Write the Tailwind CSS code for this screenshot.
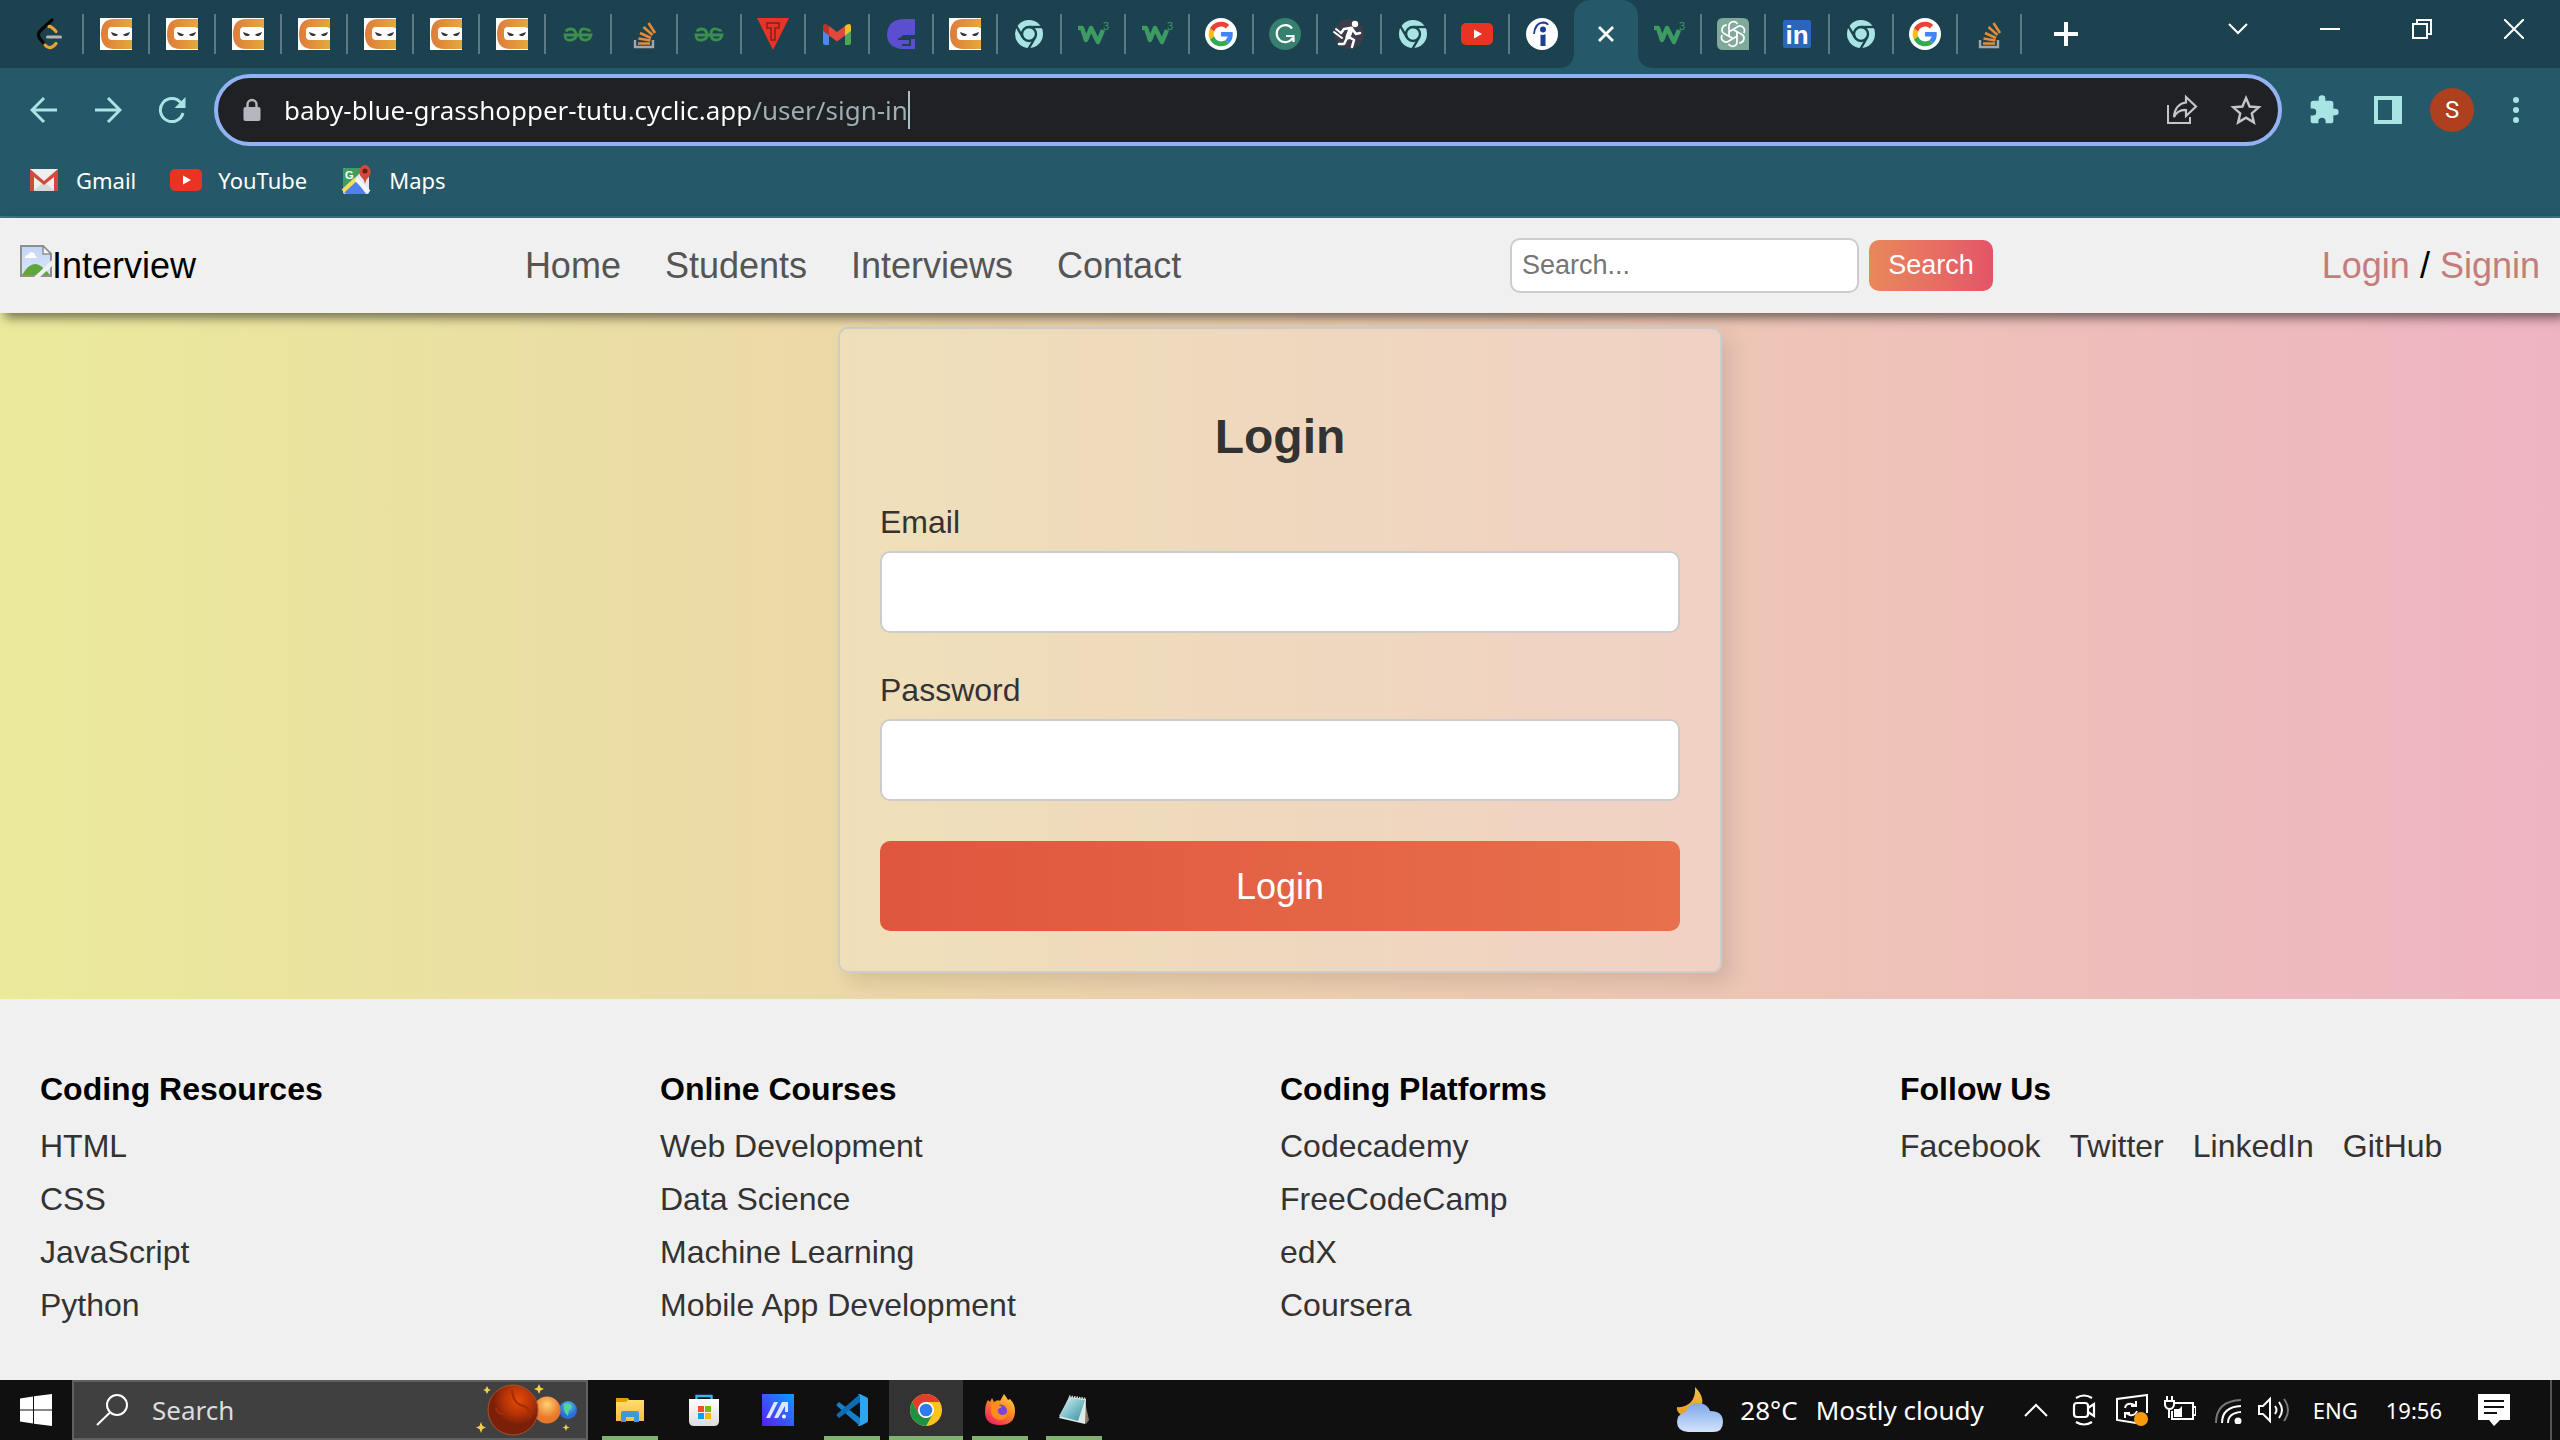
<!DOCTYPE html>
<html lang="en">
<head>
<meta charset="utf-8">
<meta name="viewport" content="width=device-width, initial-scale=1">
<title>Sign in</title>
<script src="https://cdn.jsdelivr.net/npm/@tailwindcss/browser@4"></script>
</head>
<body class="flex min-h-screen flex-col bg-[#f0f0f0] font-['Liberation_Sans',Arial,sans-serif] text-[32px] leading-[37px] text-[#333]">

<!-- Shared icon symbols -->
<svg class="absolute size-0" aria-hidden="true">
  <defs>
    <linearGradient id="cnGrad"><stop offset="0" stop-color="#de7c3c"/><stop offset="1" stop-color="#e5a83a"/></linearGradient>
    <linearGradient id="sky" x2="0" y2="1"><stop offset="0" stop-color="#c3d5f6"/><stop offset="1" stop-color="#dbe6fb"/></linearGradient>
    <linearGradient id="folder" x2="0" y2="1"><stop offset="0" stop-color="#ffdc6e"/><stop offset="1" stop-color="#f8bd40"/></linearGradient>
    <linearGradient id="bag" x2="0" y2="1"><stop offset="0" stop-color="#fff"/><stop offset="1" stop-color="#dcdcdc"/></linearGradient>
    <linearGradient id="myasus" x1="0" y1="1" x2="1" y2="0"><stop offset="0" stop-color="#5a1cf5"/><stop offset="1" stop-color="#0f9bff"/></linearGradient>
    <radialGradient id="mars" cx=".6" cy=".3"><stop offset="0" stop-color="#e84a06"/><stop offset=".6" stop-color="#b23206"/><stop offset="1" stop-color="#7a1f08"/></radialGradient>
    <radialGradient id="venus" cx=".5" cy=".3"><stop offset="0" stop-color="#ffd070"/><stop offset="1" stop-color="#e8782c"/></radialGradient>
    <radialGradient id="earth" cx=".5" cy=".3"><stop offset="0" stop-color="#5fc4ee"/><stop offset="1" stop-color="#2a6fd6"/></radialGradient>
    <linearGradient id="cloud" x2="0" y2="1"><stop offset="0" stop-color="#7ea6ea"/><stop offset="1" stop-color="#d3e4fb"/></linearGradient>
    <linearGradient id="moon" x2="0" y2="1"><stop offset="0" stop-color="#f2c04a"/><stop offset="1" stop-color="#ea9a1e"/></linearGradient>
    <linearGradient id="fox" x1="1" y1="0" x2=".3" y2="1"><stop offset="0" stop-color="#ffe14a"/><stop offset=".5" stop-color="#ff8a1e"/><stop offset="1" stop-color="#f0265e"/></linearGradient>
    <linearGradient id="pad" x2="1" y2="1"><stop offset="0" stop-color="#dff4f6"/><stop offset=".6" stop-color="#6fb8c4"/><stop offset="1" stop-color="#3d8c9a"/></linearGradient>
  </defs>
  <symbol id="leet" viewBox="0 0 32 32"><path d="M18 2 L6.500 12.500 Q3 16 5.500 20 L11 27" fill="none" stroke="#070707" stroke-width="3.200" stroke-linecap="round"/><path d="M15 8.500 Q17 8 22 13.500 M11 27 Q16 33 22 25.500" fill="none" stroke="#eaa136" stroke-width="3.200" stroke-linecap="round"/><path d="M13.500 19h13" stroke="#b3b3b3" stroke-width="3" stroke-linecap="round"/></symbol>
  <symbol id="cn" viewBox="0 0 32 32"><path d="M0 0h32v32H0z" fill="#fff"/><path d="M32 1H14Q1 1 1 16t13 15h18v-9H13q-4 0-4-6t4-6h19z" fill="url(#cnGrad)"/><rect x="8" y="9" width="24" height="13" rx="4" fill="#fff"/><path d="M11 14l7 2.500q-1 2-3.500 1.500T11 14zM30 14l-7 2.500q1 2 3.500 1.500T30 14z" fill="#333"/></symbol>
  <symbol id="gfg" viewBox="0 0 32 32"><g fill="none" stroke="#3b8f4c" stroke-width="2.800"><path d="M4 13.500Q5 11 9 11t5 5-5 6-6-5h26q-1 5-6 5t-5-6 5-5 5 2.500"/></g></symbol>
  <symbol id="so" viewBox="0 0 32 32"><path d="M7 22v7h18v-7" fill="none" stroke="#a6a6a6" stroke-width="2.400"/><g stroke="#e58a36" stroke-width="2.600"><path d="M10 25.500h12M10.500 20.500l12 2M12 15l11 5M15.500 9l9 8M20.500 5l6.500 10"/></g></symbol>
  <symbol id="chromeMono" viewBox="0 0 32 32"><circle cx="16" cy="16" r="14" fill="#a8e4e4"/><circle cx="16" cy="16" r="7" fill="none" stroke="#1c424f" stroke-width="2.400"/><g stroke="#1c424f" stroke-width="2.400"><path d="M16 9h15"/><path d="M16 9h15" transform="rotate(120 16 16)"/><path d="M16 9h15" transform="rotate(240 16 16)"/></g></symbol>
  <symbol id="w3" viewBox="0 0 32 32"><path d="M1 10h4l4 12 5-12 7 14 5-12" fill="none" stroke="#3c9a62" stroke-width="4.500" stroke-linejoin="round"/><text x="26" y="12" font-size="11" font-family="Liberation Sans" fill="#3c9a62">3</text></symbol>
  <symbol id="google" viewBox="0 0 48 48"><circle cx="24" cy="24" r="24" fill="#fff"/><g transform="translate(5.500 5.500) scale(.77)"><path fill="#EA4335" d="M24 9.500c3.540 0 6.710 1.220 9.210 3.600l6.850-6.850C35.900 2.380 30.470 0 24 0 14.620 0 6.510 5.380 2.560 13.220l7.980 6.190C12.430 13.720 17.740 9.500 24 9.500z"/><path fill="#4285F4" d="M46.980 24.550c0-1.570-.15-3.090-.38-4.550H24v9.020h12.940c-.58 2.960-2.260 5.480-4.780 7.180l7.730 6c4.510-4.180 7.090-10.360 7.090-17.650z"/><path fill="#FBBC05" d="M10.530 28.590c-.48-1.450-.76-2.990-.76-4.590s.27-3.140.76-4.590l-7.980-6.190C.92 16.460 0 20.120 0 24c0 3.880.92 7.540 2.560 10.780l7.970-6.190z"/><path fill="#34A853" d="M24 48c6.480 0 11.930-2.130 15.890-5.810l-7.730-6c-2.150 1.450-4.920 2.300-8.160 2.300-6.260 0-11.570-4.220-13.470-9.910l-7.980 6.190C6.510 42.620 14.620 48 24 48z"/></g></symbol>
  <symbol id="yt" viewBox="0 0 32 32"><rect y="5" width="32" height="22" rx="5" fill="#ea3323"/><path d="M13 11.500v9l8-4.500z" fill="#fff"/></symbol>
</svg>

<!-- Browser window -->
<header class="bg-[#255868] font-['Noto_Sans','Open_Sans',sans-serif] text-white">
  <div class="flex h-[68px] items-stretch justify-between bg-[#1c424f]">
    <div role="tablist" aria-label="Open tabs" class="flex items-center pl-[18px]">
      <button aria-label="LeetCode" class="grid h-10 w-[66px] place-items-center border-r-2 border-[#5c7b85]"><svg class="size-8"><use href="#leet"/></svg></button>
      <button aria-label="Coding Ninjas" class="grid h-10 w-[66px] place-items-center border-r-2 border-[#5c7b85]"><svg class="size-8"><use href="#cn"/></svg></button>
      <button aria-label="Coding Ninjas" class="grid h-10 w-[66px] place-items-center border-r-2 border-[#5c7b85]"><svg class="size-8"><use href="#cn"/></svg></button>
      <button aria-label="Coding Ninjas" class="grid h-10 w-[66px] place-items-center border-r-2 border-[#5c7b85]"><svg class="size-8"><use href="#cn"/></svg></button>
      <button aria-label="Coding Ninjas" class="grid h-10 w-[66px] place-items-center border-r-2 border-[#5c7b85]"><svg class="size-8"><use href="#cn"/></svg></button>
      <button aria-label="Coding Ninjas" class="grid h-10 w-[66px] place-items-center border-r-2 border-[#5c7b85]"><svg class="size-8"><use href="#cn"/></svg></button>
      <button aria-label="Coding Ninjas" class="grid h-10 w-[66px] place-items-center border-r-2 border-[#5c7b85]"><svg class="size-8"><use href="#cn"/></svg></button>
      <button aria-label="Coding Ninjas" class="grid h-10 w-[66px] place-items-center border-r-2 border-[#5c7b85]"><svg class="size-8"><use href="#cn"/></svg></button>
      <button aria-label="GeeksforGeeks" class="grid h-10 w-[66px] place-items-center border-r-2 border-[#5c7b85]"><svg class="size-8"><use href="#gfg"/></svg></button>
      <button aria-label="Stack Overflow" class="grid h-10 w-[66px] place-items-center border-r-2 border-[#5c7b85]"><svg class="size-8"><use href="#so"/></svg></button>
      <button aria-label="GeeksforGeeks" class="grid h-10 w-16 place-items-center border-r-2 border-[#5c7b85]"><svg class="size-8"><use href="#gfg"/></svg></button>
      <button aria-label="Titan" class="grid h-10 w-16 place-items-center border-r-2 border-[#5c7b85]"><svg class="size-8" viewBox="0 0 32 32"><path d="M0 0h32L16 32z" fill="#e93323"/><path d="M10 5h12v5h-4v12h-4V10h-4z" fill="none" stroke="#7d2224" stroke-width="1.500"/></svg></button>
      <button aria-label="Gmail" class="grid h-10 w-16 place-items-center border-r-2 border-[#5c7b85]"><svg class="size-8" viewBox="0 0 32 32"><path d="M2 8v17q0 2 2 2h4V14z" fill="#4f87ee"/><path d="M30 8v17q0 2-2 2h-4V14z" fill="#4ba656"/><path d="M24 8l2-1.500q4-2 4 2.500v4l-6 4.500z" fill="#f4bd2c"/><path d="M8 8L6 6.500Q2 4.500 2 9v4l6 4.500z" fill="#b93427"/><path d="M8 8l8 6 8-6v9.500l-8 6-8-6z" fill="#e04a3c"/></svg></button>
      <button aria-label="Dashboard" class="grid h-10 w-16 place-items-center border-r-2 border-[#5c7b85]"><svg class="size-8" viewBox="0 0 32 32"><path d="M30 1v16H20q-4 0-5 4h15v10H16Q2 29 2 16 3 1 20 1z" fill="#5b4fd0"/><path d="M13 21h12v6h-8" fill="none" stroke="#1c424f" stroke-width="2"/></svg></button>
      <button aria-label="Coding Ninjas" class="grid h-10 w-16 place-items-center border-r-2 border-[#5c7b85]"><svg class="size-8"><use href="#cn"/></svg></button>
      <button aria-label="Chrome" class="grid h-10 w-16 place-items-center border-r-2 border-[#5c7b85]"><svg class="size-8"><use href="#chromeMono"/></svg></button>
      <button aria-label="W3Schools" class="grid h-10 w-16 place-items-center border-r-2 border-[#5c7b85]"><svg class="size-8"><use href="#w3"/></svg></button>
      <button aria-label="W3Schools" class="grid h-10 w-16 place-items-center border-r-2 border-[#5c7b85]"><svg class="size-8"><use href="#w3"/></svg></button>
      <button aria-label="Google" class="grid h-10 w-16 place-items-center border-r-2 border-[#5c7b85]"><svg class="size-8"><use href="#google"/></svg></button>
      <button aria-label="Grammarly" class="grid h-10 w-16 place-items-center border-r-2 border-[#5c7b85]"><svg class="size-8" viewBox="0 0 32 32"><circle cx="16" cy="16" r="16" fill="#36806f"/><path d="M23 10.500A8.500 8.500 0 1 0 23.500 20M17 18h7.500v6" fill="none" stroke="#fff" stroke-width="2.200"/></svg></button>
      <button aria-label="Runner" class="grid h-10 w-16 place-items-center border-r-2 border-[#5c7b85]"><svg class="size-8" viewBox="0 0 32 32"><circle cx="16" cy="16" r="15" fill="#3c3d4b"/><circle cx="22" cy="6" r="3.200" fill="#fff"/><g fill="none" stroke="#fff" stroke-linecap="round" stroke-linejoin="round"><path d="M18 11l-3 8" stroke-width="5"/><path d="M17 10l-6 1-3 4M20 12l3 4 4-1M16 19l5 3-2 7M14 20l-3 6H6" stroke-width="2.600"/><path d="M1 14l8 6M3 11l5 4" stroke-width="2"/></g></svg></button>
      <button aria-label="Chrome" class="grid h-10 w-16 place-items-center border-r-2 border-[#5c7b85]"><svg class="size-8"><use href="#chromeMono"/></svg></button>
      <button aria-label="YouTube" class="grid h-10 w-16 place-items-center border-r-2 border-[#5c7b85]"><svg class="size-8"><use href="#yt"/></svg></button>
      <button aria-label="Indeed" class="grid h-10 w-16 place-items-center"><svg class="size-8" viewBox="0 0 32 32"><circle cx="16" cy="16" r="16" fill="#fff"/><circle cx="17" cy="11.500" r="3" fill="#1c3f94"/><path d="M14.500 16.500q2.500 1 5-.500V28h-5z" fill="#1c3f94"/><path d="M8 16Q9 5 17 4.500q4 0 5 2.500" fill="none" stroke="#1c3f94" stroke-width="1.800"/></svg></button>
      <button aria-label="Close tab" class="relative grid h-[68px] w-16 place-items-center rounded-t-2xl bg-[#255868]">
        <svg class="absolute bottom-0 -left-4 size-4" viewBox="0 0 16 16"><path d="M16 0v16H0Q16 16 16 0z" fill="#255868"/></svg>
        <svg class="absolute -right-4 bottom-0 size-4" viewBox="0 0 16 16"><path d="M0 0v16h16Q0 16 0 0z" fill="#255868"/></svg>
        <svg class="size-4" viewBox="0 0 16 16"><path d="M1 1l14 14M15 1L1 15" stroke="#fff" stroke-width="2.800"/></svg>
      </button>
      <button aria-label="W3Schools" class="grid h-10 w-16 place-items-center border-r-2 border-[#5c7b85]"><svg class="size-8"><use href="#w3"/></svg></button>
      <button aria-label="ChatGPT" class="grid h-10 w-16 place-items-center border-r-2 border-[#5c7b85]"><svg class="size-8" viewBox="0 0 32 32"><path d="M6 0h20q6 0 6 6v26H6q-6 0-6-6V6q0-6 6-6z" fill="#7fa99b"/><g fill="none" stroke="#fff" stroke-width="1.700"><path d="M16 11.500l-4 2.300V8.500a4.500 4.500 0 0 1 8.500-2.300"/><path d="M16 11.500l-4 2.300V8.500a4.500 4.500 0 0 1 8.500-2.300" transform="rotate(60 16 16)"/><path d="M16 11.500l-4 2.300V8.500a4.500 4.500 0 0 1 8.500-2.300" transform="rotate(120 16 16)"/><path d="M16 11.500l-4 2.300V8.500a4.500 4.500 0 0 1 8.500-2.300" transform="rotate(180 16 16)"/><path d="M16 11.500l-4 2.300V8.500a4.500 4.500 0 0 1 8.500-2.300" transform="rotate(240 16 16)"/><path d="M16 11.500l-4 2.300V8.500a4.500 4.500 0 0 1 8.500-2.300" transform="rotate(300 16 16)"/></g></svg></button>
      <button aria-label="LinkedIn" class="grid h-10 w-16 place-items-center border-r-2 border-[#5c7b85]"><svg class="size-8" viewBox="0 0 32 32"><rect x="2" y="2" width="28" height="28" rx="2" fill="#2a66bc"/><text x="16" y="26" text-anchor="middle" font-family="Liberation Sans" font-weight="700" font-size="26" fill="#fff">in</text></svg></button>
      <button aria-label="Chrome" class="grid h-10 w-16 place-items-center border-r-2 border-[#5c7b85]"><svg class="size-8"><use href="#chromeMono"/></svg></button>
      <button aria-label="Google" class="grid h-10 w-16 place-items-center border-r-2 border-[#5c7b85]"><svg class="size-8"><use href="#google"/></svg></button>
      <button aria-label="Stack Overflow" class="grid h-10 w-16 place-items-center border-r-2 border-[#5c7b85]"><svg class="size-8"><use href="#so"/></svg></button>
      <button aria-label="New tab" class="grid h-10 w-[88px] place-items-center"><svg class="size-6" viewBox="0 0 24 24"><path d="M12 1v22M1 12h22" stroke="#fff" stroke-width="4" stroke-linecap="round"/></svg></button>
    </div>
    <div class="flex h-[58px] items-center">
      <button aria-label="Search tabs" class="grid w-[92px] place-items-center"><svg class="size-5" viewBox="0 0 20 20"><path d="M1 5l9 9 9-9" fill="none" stroke="#fff" stroke-width="2"/></svg></button>
      <button aria-label="Minimize" class="grid w-[92px] place-items-center"><svg class="size-5" viewBox="0 0 20 20"><path d="M0 10h20" stroke="#fff" stroke-width="2"/></svg></button>
      <button aria-label="Restore" class="grid w-[92px] place-items-center"><svg class="size-5" viewBox="0 0 20 20"><path d="M1 5h14v14H1zM5 5V1h14v14h-4" fill="none" stroke="#fff" stroke-width="2"/></svg></button>
      <button aria-label="Close" class="grid w-[92px] place-items-center"><svg class="size-5" viewBox="0 0 20 20"><path d="M0 0l20 20M20 0L0 20" stroke="#fff" stroke-width="2"/></svg></button>
    </div>
  </div>

  <div class="flex items-center pt-1.5 text-[#a8e4e4]">
    <div class="flex pl-3">
      <button aria-label="Back" class="grid h-16 w-16 place-items-center"><svg class="size-7" viewBox="0 0 28 28"><path d="M27 14H3M14 2L2 14l12 12" fill="none" stroke="currentColor" stroke-width="3"/></svg></button>
      <button aria-label="Forward" class="grid h-16 w-16 place-items-center"><svg class="size-7" viewBox="0 0 28 28"><path d="M1 14h24M14 2l12 12-12 12" fill="none" stroke="currentColor" stroke-width="3"/></svg></button>
      <button aria-label="Reload" class="grid h-16 w-16 place-items-center"><svg class="size-7" viewBox="0 0 28 28"><path d="M23 7A11.500 11.500 0 1 0 25 17" fill="none" stroke="currentColor" stroke-width="3"/><path d="M27.500 1v11h-11z" fill="currentColor"/></svg></button>
    </div>
    <div class="ml-[10px] flex h-[72px] flex-1 items-center rounded-full border-4 border-[#93b2f2] bg-[#202124] pl-6">
      <svg class="h-6 w-5 shrink-0" viewBox="0 0 20 24"><rect x="1.500" y="9" width="17" height="14" rx="2" fill="#b4b8be"/><path d="M5.500 10V6.500a4.500 4.500 0 0 1 9 0V10" fill="none" stroke="#b4b8be" stroke-width="2.400"/></svg>
      <input type="text" aria-label="Address" value="baby-blue-grasshopper-tutu.cyclic.app/user/sign-in" class="ml-[22px] field-sizing-content bg-[linear-gradient(to_right,#fff_468px,#9fb0b5_468px)] bg-clip-text text-[26px] leading-9 text-transparent outline-none">
      <span class="h-[38px] w-0.5 bg-[#a9bfc3]"></span>
      <button aria-label="Share" class="ml-auto grid w-16 place-items-center text-[#c3c5c8]"><svg class="size-8" viewBox="0 0 32 32"><path d="M2 11v18h22v-6" fill="none" stroke="currentColor" stroke-width="2"/><path d="M20 3l10 9.500L20 22v-6q-8-.500-12 7 1-13 12-14.500z" fill="none" stroke="currentColor" stroke-width="2.200"/></svg></button>
      <button aria-label="Bookmark this tab" class="grid w-16 place-items-center text-[#c3c5c8]"><svg class="size-8" viewBox="0 0 32 32"><path d="M16 4l3.600 8.500 9.200.800-7 6.100 2.100 9L16 23.600l-7.900 4.800 2.100-9-7-6.100 9.200-.800z" fill="none" stroke="currentColor" stroke-width="2.400"/></svg></button>
    </div>
    <div class="flex pr-3 pl-[10px]">
      <button aria-label="Extensions" class="grid h-16 w-16 place-items-center"><svg class="size-8" viewBox="0 0 24 24"><path d="M20.500 11H19V7a2 2 0 0 0-2-2h-4V3.500a2.500 2.500 0 0 0-5 0V5H4a2 2 0 0 0-2 2v3.800h1.500a2.700 2.700 0 0 1 0 5.400H2V20a2 2 0 0 0 2 2h3.800v-1.500a2.700 2.700 0 0 1 5.400 0V22H17a2 2 0 0 0 2-2v-4h1.500a2.500 2.500 0 0 0 0-5z" fill="currentColor"/></svg></button>
      <button aria-label="Side panel" class="grid h-16 w-16 place-items-center"><svg class="size-7" viewBox="0 0 28 28"><path d="M0 0h28v28H0zM4 4v20h14V4z" fill="currentColor" fill-rule="evenodd"/></svg></button>
      <button aria-label="Profile" class="grid h-16 w-16 place-items-center"><span class="grid size-11 place-items-center rounded-full bg-[#ae3f1f] font-[Roboto,sans-serif] text-2xl text-white">S</span></button>
      <button aria-label="Menu" class="grid h-16 w-16 place-items-center"><svg class="h-7 w-2" viewBox="0 0 8 28"><g fill="currentColor"><circle cx="4" cy="4" r="3"/><circle cx="4" cy="14" r="3"/><circle cx="4" cy="24" r="3"/></g></svg></button>
    </div>
  </div>

  <nav aria-label="Bookmarks" class="flex h-[72px] items-center gap-[34px] border-b-2 border-[#3f7583] pb-0.5 pl-7 text-[22px]">
    <a href="#gmail" class="flex items-center gap-4"><svg class="size-8" viewBox="0 0 32 32"><path d="M2 5h28v22H2z" fill="#eee"/><path d="M16 18L5 27h22z" fill="#d8d8d8"/><path d="M2 27V5l14 12L30 5v22h-4V13L16 21 6 13v14z" fill="#d14b3d"/></svg>Gmail</a>
    <a href="#youtube" class="flex items-center gap-4"><svg class="size-8"><use href="#yt"/></svg>YouTube</a>
    <a href="#maps" class="flex items-center gap-4"><svg class="size-8" viewBox="0 0 32 32"><rect x="2" y="4" width="26" height="26" rx="2" fill="#e8e8e8"/><path d="M4 4h20L2 26V6q0-2 2-2z" fill="#3f9e5f"/><path d="M15 16L3 28q1 2 3 2h19z" fill="#4f82e8"/><path d="M15 15L2 27" stroke="#f6dc59" stroke-width="4"/><path d="M15 15l13 13" stroke="#f4f4f4" stroke-width="4"/><text x="4" y="15" font-family="Liberation Sans" font-size="11" font-weight="700" fill="#fff">G</text><path d="M24 20q-1-5-4.500-8-2-3-.500-7 2-4 5-4t5 4q1.500 4-.500 7-3.500 3-4.500 8z" fill="#d5493b"/><circle cx="24" cy="7" r="2.500" fill="#6d1d18"/></svg>Maps</a>
  </nav>
</header>

<!-- Site navigation -->
<div class="relative z-10 flex h-[95px] items-center justify-between bg-[#f0f0f0] px-5 text-[36px] leading-[42px] text-black shadow-[5px_5px_10px_rgba(0,0,0,0.5)]">
  <a href="#top" class="flex items-start"><svg class="size-8" viewBox="0 0 32 32"><path d="M1 1h22l8 8v22H1z" fill="url(#sky)" stroke="#8f8f8f" stroke-width="2"/><path d="M23 1v8h8z" fill="#fff" stroke="#8f8f8f" stroke-width="1.500"/><path d="M5 13q0-3 3-3 2-5 6-2 2 2 1 3 2 0 2 2z" fill="#fff"/><path d="M2 30q7-12 14-11 6 1 14 11z" fill="#5fa63c"/><path d="M14 32L32 15v6L20 32z" fill="#f0f0f0"/></svg>Interview</a>
  <nav aria-label="Site" class="flex gap-11 text-[#555]">
    <a href="#home">Home</a>
    <a href="#students">Students</a>
    <a href="#interviews">Interviews</a>
    <a href="#contact">Contact</a>
  </nav>
  <form class="flex items-center gap-[10px] text-[27px] leading-[31px]">
    <input type="search" aria-label="Search" placeholder="Search..." class="h-[55px] w-[349px] rounded-[10px] border-2 border-[#ccc] bg-white px-[10px] placeholder:text-[#757575]">
    <button type="button" class="h-[51px] w-[124px] rounded-[10px] bg-linear-to-r from-[#e8885a] to-[#e35468] text-white">Search</button>
  </form>
  <div class="text-black"><a href="#login" class="text-[#c57d7b]">Login</a> / <a href="#signin" class="text-[#c57d7b]">Signin</a></div>
</div>

<!-- Login form -->
<main class="flex flex-1 items-start justify-center bg-linear-to-r/srgb from-[#eaea9b] to-[#efb4c2] pt-[14px] pb-[26px]">
  <form class="flex w-[884px] flex-col rounded-[10px] border-2 border-[#ccc] bg-white/20 p-10 shadow-[10px_10px_20px_rgba(0,0,0,0.1)]">
    <h1 class="my-10 text-center text-5xl leading-14 font-bold">Login</h1>
    <label for="email" class="mb-3 leading-[34px]">Email</label>
    <input id="email" type="email" class="mb-10 h-[82px] rounded-[10px] border-2 border-[#ccc] bg-white px-5">
    <label for="password" class="mb-3 leading-[34px]">Password</label>
    <input id="password" type="password" class="mb-10 h-[82px] rounded-[10px] border-2 border-[#ccc] bg-white px-5">
    <button type="button" class="h-[90px] rounded-[10px] bg-linear-to-r/srgb from-[#df563e] to-[#e8704c] text-[36px] text-white">Login</button>
  </form>
</main>

<footer class="grid grid-cols-4 px-10 pt-[72px] pb-14">
  <section>
    <h2 class="mb-5 font-bold text-black">Coding Resources</h2>
    <ul class="flex flex-col gap-4"><li><a href="#html">HTML</a></li><li><a href="#css">CSS</a></li><li><a href="#js">JavaScript</a></li><li><a href="#python">Python</a></li></ul>
  </section>
  <section>
    <h2 class="mb-5 font-bold text-black">Online Courses</h2>
    <ul class="flex flex-col gap-4"><li><a href="#web">Web Development</a></li><li><a href="#data">Data Science</a></li><li><a href="#ml">Machine Learning</a></li><li><a href="#mobile">Mobile App Development</a></li></ul>
  </section>
  <section>
    <h2 class="mb-5 font-bold text-black">Coding Platforms</h2>
    <ul class="flex flex-col gap-4"><li><a href="#codecademy">Codecademy</a></li><li><a href="#fcc">FreeCodeCamp</a></li><li><a href="#edx">edX</a></li><li><a href="#coursera">Coursera</a></li></ul>
  </section>
  <section>
    <h2 class="mb-5 font-bold text-black">Follow Us</h2>
    <ul class="flex gap-[29px]"><li><a href="#facebook">Facebook</a></li><li><a href="#twitter">Twitter</a></li><li><a href="#linkedin">LinkedIn</a></li><li><a href="#github">GitHub</a></li></ul>
  </section>
</footer>

<!-- Taskbar -->
<div class="flex h-[60px] items-stretch justify-between bg-[#101010] font-['Noto_Sans','Open_Sans',sans-serif] text-white">
  <div class="flex">
    <button aria-label="Start" class="grid w-[72px] place-items-center"><svg class="size-8" viewBox="0 0 32 32"><path d="M0 4.500l13-2v13H0zM14 2.300L32 0v15.500H14zM0 16.500h13v13l-13-2zM14 16.500h18V32l-18-2.300z" fill="#fff"/></svg></button>
    <button class="mr-[5px] flex w-[516px] items-center border-2 border-[#606060] bg-[#404040] pr-2 pl-[22px] text-[26px] text-[#dcdcdc]">
      <svg class="size-8" viewBox="0 0 32 32"><circle cx="21" cy="11" r="10" fill="none" stroke="#fff" stroke-width="2"/><path d="M14 18.500L1 31" stroke="#fff" stroke-width="2"/></svg>
      <span class="ml-6">Search</span>
      <svg class="ml-auto h-14 w-[102px]" viewBox="0 0 102 56"><circle cx="92" cy="28" r="9" fill="url(#earth)"/><path d="M88 22q5-2 8 2-1 4-3 4l-1 6q-3-2-4-7z" fill="#4fd69a"/><circle cx="71" cy="28" r="13.500" fill="url(#venus)"/><circle cx="37" cy="28" r="25" fill="url(#mars)" stroke="#a5522c"/><path d="M36 8q1 14 12 16 7 3 6 12M20 26q2 8 10 5" fill="none" stroke="#a02c08" stroke-width="2"/><g fill="#f3cf4a"><path d="M11 4l1.500 3 2.500 1-2.500 1L11 12 9.500 9 7 8l2.500-1z"/><path d="M63 2l1.500 3.500L68 7l-3.500 1.500L63 12l-1.500-3.500L58 7l3.500-1.500z"/><path d="M5 40l1.500 4L10 45.500 6.500 47 5 51l-1.500-4L0 45.500 3.500 44z"/><path d="M90 42l1 2.500 2.500 1-2.500 1L90 49l-1-2.500-2.500-1 2.500-1z"/></g></svg>
    </button>
    <div class="flex">
      <button aria-label="File Explorer" class="flex w-[74px] flex-col items-center justify-between"><svg class="mt-3.5 size-8" viewBox="0 0 32 32"><path d="M2 4h12l2 3h-2v4H2z" fill="#e0a000"/><path d="M2 8h10l2-2h16v21H2z" fill="url(#folder)"/><path d="M7 28v-9q0-2 2-2h14q2 0 2 2v9h-5v-5h-8v5z" fill="#3f97dd"/></svg><span class="h-1 w-14 bg-[#84b070]"></span></button>
      <button aria-label="Microsoft Store" class="flex w-[74px] flex-col items-center"><svg class="mt-3.5 size-8" viewBox="0 0 32 32"><path d="M8.500 7V2h15v5" fill="none" stroke="#2fb4f0" stroke-width="2.400"/><path d="M1 5h30v22q0 5-5 5H6q-5 0-5-5z" fill="url(#bag)"/><path d="M10 12h6v6h-6z" fill="#f25022"/><path d="M17 12h6v6h-6z" fill="#7fba00"/><path d="M10 19h6v6h-6z" fill="#00a4ef"/><path d="M17 19h6v6h-6z" fill="#ffb900"/></svg></button>
      <button aria-label="MyASUS" class="flex w-[74px] flex-col items-center"><svg class="mt-3.5 size-8" viewBox="0 0 32 32"><path d="M0 0h32v32H0z" fill="url(#myasus)"/><path d="M4 24L12 8h4L8 24zM12 24L20 8h6v10h-3v-6l-7 12z" fill="#dfe4ff"/><circle cx="22" cy="22.500" r="2" fill="#fff"/></svg></button>
      <button aria-label="Visual Studio Code" class="flex w-[74px] flex-col items-center justify-between"><svg class="mt-3.5 size-8" viewBox="0 0 32 32"><path d="M3 8L24 24v8L1 12q-1-1 0-2z" fill="#1580c8"/><path d="M3 24L24 8V0L1 20q-1 1 0 2z" fill="#0f6cb4"/><path d="M23 0q1 0 2 .500l6 3q1 .500 1 2v21q0 1.500-1 2l-6 3q-2 1-3.500-.500 2.500.500 2.500-2V3q0-2.500-2.500-2.500z" fill="#2da5f0"/></svg><span class="h-1 w-14 bg-[#84b070]"></span></button>
      <button aria-label="Chrome" class="flex w-[74px] flex-col items-center justify-between bg-[#333]"><svg class="mt-3.5 size-8" viewBox="0 0 32 32"><circle cx="16" cy="16" r="16" fill="#fcc31e"/><path d="M2.150 8A16 16 0 0 1 29.850 8H16l-7 12z" fill="#e23c2e"/><path d="M2.150 8A16 16 0 0 0 16 32l6.900-12-6.900 4-7-4z" fill="#1f9143"/><circle cx="16" cy="16" r="8" fill="#fff"/><circle cx="16" cy="16" r="6.300" fill="#2f7bee"/></svg><span class="h-1 w-full bg-[#84b070]"></span></button>
      <button aria-label="Firefox" class="flex w-[74px] flex-col items-center justify-between"><svg class="mt-3.5 size-8" viewBox="0 0 32 32"><path d="M4 6l2 2 2-4 2 4q4-3 6-1l4-7q3 4 4 6l2-1q5 5 5 12 0 14-15 14T1 18Q1 10 4 6z" fill="url(#fox)"/><circle cx="16.500" cy="17" r="6.500" fill="#7a46d6"/><path d="M7 11q4-2 8 0l3 2-4 2q-1 5 4 6 4 0 6-3-1 8-8 8-9-1-9-10z" fill="#ff8c20"/></svg><span class="h-1 w-14 bg-[#84b070]"></span></button>
      <button aria-label="Notepad" class="flex w-[74px] flex-col items-center justify-between"><svg class="mt-3.5 size-8" viewBox="0 0 32 32"><path d="M26 4l5 22-3 4-3-2z" fill="#8a7a60"/><path d="M11 3l17 2-1 25-26-6z" fill="#dfe9ea"/><path d="M11 4l16 2-7 21L1 22z" fill="url(#pad)"/><path d="M11 2.500l17 2.500" stroke="#d5d5d5" stroke-width="2.500" stroke-dasharray="1.500 1"/></svg><span class="h-1 w-14 bg-[#84b070]"></span></button>
    </div>
  </div>
  <div class="flex items-center">
    <button class="flex items-center gap-4 text-[26px]">
      <svg class="size-12" viewBox="0 0 48 48"><path d="M19 1q13 13 3 24-8 8-17 4-5-4-4-8 8 1 14-5 5-6 4-15z" fill="url(#moon)"/><path d="M12 46Q1 45 1 36q0-8 9-10 2-9 12-9 9 0 12 8 13 0 13 11 0 10-10 10z" fill="url(#cloud)"/></svg>
      <span class="flex gap-[18px]"><span>28°C</span><span>Mostly cloudy</span></span>
    </button>
    <button aria-label="Show hidden icons" class="ml-10"><svg class="size-6" viewBox="0 0 24 24"><path d="M1 18L12 7l11 11" fill="none" stroke="#fff" stroke-width="2"/></svg></button>
    <button aria-label="Meet Now" class="ml-5"><svg class="size-8" viewBox="0 0 32 32"><g fill="none" stroke="#fff" stroke-width="2.200"><rect x="6" y="9" width="14" height="14" rx="3"/><path d="M20 14l6-4v12l-6-4M8 4q8-5 16 0M8 28q8 5 16 0"/></g></svg></button>
    <button aria-label="Update" class="ml-4"><svg class="size-8" viewBox="0 0 32 32"><path d="M20 29L1 26V5l30-4v18" fill="none" stroke="#fff" stroke-width="2"/><path d="M9 14q1-5 7-4l4 2M20 7v5h-5M21 17q-2 5-7 4l-4-2M9 24v-5h5" fill="none" stroke="#fff" stroke-width="2"/><circle cx="25" cy="25" r="7" fill="#fb9a0b"/></svg></button>
    <button aria-label="Battery" class="ml-4"><svg class="size-8" viewBox="0 0 32 32"><path d="M11 9h18v16H8v-8M29 13h3v8h-3" fill="none" stroke="#fff" stroke-width="2"/><path d="M10 15h5l3-3v11h-8z" fill="#fff"/><path d="M1 7h9v4q-1 4-4.500 4T1 11zM3 7V2M8 7V2M5 15v9" fill="none" stroke="#fff" stroke-width="2"/></svg></button>
    <button aria-label="Wi-Fi" class="ml-[18px]"><svg class="size-7" viewBox="0 0 28 28"><g fill="none" stroke-width="2"><path d="M2 27Q2 5 27 4" stroke="#777"/><path d="M8 27q0-16 19-17M14 27q0-10 13-11" stroke="#fff"/></g><circle cx="24" cy="25" r="3.500" fill="#fff"/></svg></button>
    <button aria-label="Volume" class="ml-4"><svg class="size-8" viewBox="0 0 32 32"><path d="M1 12h4l7-7v22l-7-7H1z" fill="none" stroke="#fff" stroke-width="2"/><path d="M17 12q3 4 0 8M21 8q6 8 0 16" fill="none" stroke="#fff" stroke-width="2"/><path d="M26 5q8 11 0 22" fill="none" stroke="#777" stroke-width="2"/></svg></button>
    <button class="ml-[23px] text-[22px]">ENG</button>
    <time datetime="19:56" class="ml-7 text-[22px]">19:56</time>
    <button aria-label="Notifications" class="ml-9 mr-10"><svg class="size-8" viewBox="0 0 32 32"><path d="M0 0h32v26H22l-6 6-5-6H0z" fill="#fff"/><path d="M6 7h20M6 13h20M6 19h13" stroke="#101010" stroke-width="2"/></svg></button>
    <span class="mr-2 h-full w-0.5 bg-[#555]"></span>
  </div>
</div>
</body>
</html>
